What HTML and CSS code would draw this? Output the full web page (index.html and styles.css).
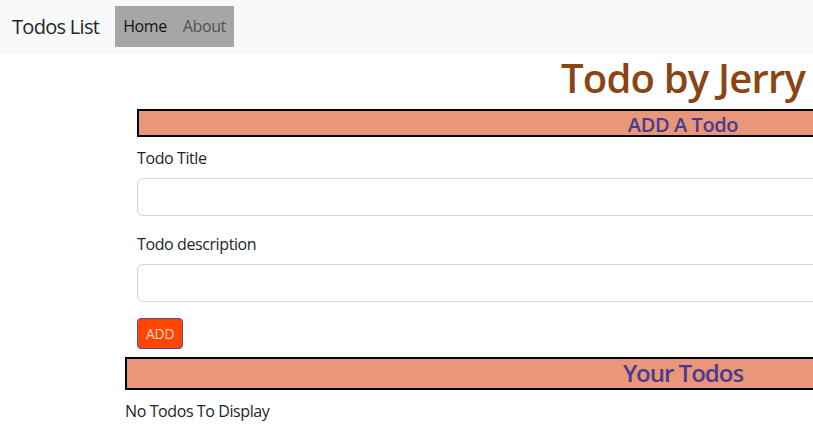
FILE: index.html
```html
<!DOCTYPE html>
<html lang="en">
<head>
<meta charset="utf-8">
<title>Todos List</title>
<link rel="stylesheet" href="styles.css">
</head>
<body>
<div class="page">
  <nav class="navbar">
    <a class="brand" href="#">Todos List</a>
    <ul class="nav">
      <li><a class="nav-link active" href="#">Home</a></li>
      <li><a class="nav-link" href="#">About</a></li>
    </ul>
  </nav>
  <h1 class="title">Todo by Jerry</h1>
  <div class="container">
    <form class="add-form">
      <h3 class="band band-small">ADD A Todo</h3>
      <label class="form-label" for="title">Todo Title</label>
      <input class="form-control" id="title" type="text">
      <label class="form-label" for="desc">Todo description</label>
      <input class="form-control" id="desc" type="text">
      <button class="btn" type="button">ADD</button>
    </form>
    <h3 class="band band-large">Your Todos</h3>
    <p class="empty">No Todos To Display</p>
  </div>
</div>
</body>
</html>
```
FILE: styles.css
```css
html, body {
  margin: 0;
  padding: 0;
  overflow: hidden;
}
body {
  font-family: "Open Sans", "Noto Sans", sans-serif;
  font-size: 16px;
  line-height: 1.5;
  letter-spacing: -0.4px;
  color: #212529;
  background: #fff;
}
.page {
  width: 1366px;
}
.navbar {
  display: flex;
  align-items: center;
  background: #f8f9fa;
  padding: 6px 12px 7px;
}
.brand {
  font-size: 20px;
  letter-spacing: -0.7px;
  color: #212529;
  text-decoration: none;
  margin-right: 16px;
}
.nav {
  display: flex;
  list-style: none;
  margin: 0;
  padding: 0;
  background: #a6a6a6;
}
.nav-link {
  display: block;
  padding: 8px 8px 9px;
  color: rgba(0,0,0,0.55);
  text-decoration: none;
}
.nav-link.active {
  color: rgba(0,0,0,0.9);
}
.title {
  margin: 0;
  text-align: center;
  font-size: 40px;
  font-weight: 600;
  line-height: 1.2;
  letter-spacing: -0.8px;
  color: #8b4513;
}
.container {
  width: 1116px;
  margin: 0 auto;
}
.add-form {
  display: flex;
  flex-direction: column;
  align-items: flex-start;
  margin: 7px 12px 0;
}
.band {
  margin: 0;
  align-self: stretch;
  text-align: center;
  background: #e9967a;
  border: 2px solid #000;
  color: #483d8b;
  font-weight: 600;
  line-height: 1.2;
}
.band-small {
  font-size: 20px;
  line-height: 24px;
  height: 22px;
  padding-top: 2px;
  margin-bottom: 9px;
}
.band-large {
  font-size: 24px;
  margin-top: 8px;
  letter-spacing: -1px;
}
.form-label {
  margin-bottom: 8px;
}
.form-control {
  align-self: stretch;
  box-sizing: border-box;
  height: 38px;
  margin: 0 0 16px;
  padding: 6px 12px;
  font: inherit;
  border: 1px solid #ced4da;
  border-radius: 6px;
  background: #fff;
}
.btn {
  font-family: inherit;
  font-size: 14px;
  line-height: 21px;
  letter-spacing: -0.3px;
  padding: 4px 8px;
  color: #e8d8d0;
  background: #ff4500;
  border: 1px solid #5a4a9a;
  border-radius: 4px;
}
.empty {
  margin: 9px 0 0;
}
```
